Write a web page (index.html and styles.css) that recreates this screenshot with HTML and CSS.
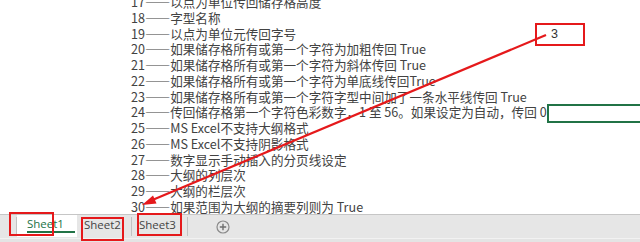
FILE: index.html
```html
<!DOCTYPE html>
<html lang="zh-CN">
<head>
<meta charset="utf-8">
<title>Sheet</title>
<link rel="stylesheet" href="styles.css">
</head>
<body>
<div class="grid">
  <ul class="rows">
    <li>17——以点为单位传回储存格高度</li>
    <li>18——字型名称</li>
    <li>19——以点为单位元传回字号</li>
    <li>20——如果储存格所有或第一个字符为加粗传回 True</li>
    <li>21——如果储存格所有或第一个字符为斜体传回 True</li>
    <li>22——如果储存格所有或第一个字符为单底线传回True</li>
    <li>23——如果储存格所有或第一个字符字型中间加了一条水平线传回 True</li>
    <li>24——传回储存格第一个字符色彩数字，1 至 56。如果设定为自动，传回 0</li>
    <li>25——MS Excel不支持大纲格式</li>
    <li>26——MS Excel不支持阴影格式</li>
    <li>27——数字显示手动插入的分页线设定</li>
    <li>28——大纲的列层次</li>
    <li>29——大纲的栏层次</li>
    <li>30——如果范围为大纲的摘要列则为 True</li>
  </ul>
</div>
<div class="tabbar">
  <div class="nav"></div>
  <div class="tab active"><span>Sheet1</span></div>
  <div class="tab t2">Sheet2</div>
  <div class="tab t3">Sheet3</div>
  <div class="add">
    <svg width="14" height="14" viewBox="0 0 14 14"><circle cx="7" cy="7" r="6" fill="none" stroke="#8a8a8a" stroke-width="1.2"/><path d="M7 3.8v6.4M3.8 7h6.4" stroke="#6f6f6f" stroke-width="1.4"/></svg>
  </div>
</div>

<div class="cell-sel"></div>
<div class="callout">3</div>
<div class="box b1"></div>
<div class="box b2"></div>
<div class="box b3"></div>
<svg class="arrow" width="640" height="242" viewBox="0 0 640 242">
  <line x1="546" y1="35" x2="150" y2="201" stroke="#e5191b" stroke-width="2.2"/>
  <polygon points="142,205 153,195.5 156.5,203.5" fill="#e5191b"/>
</svg>
</body>
</html>
```
FILE: styles.css
```css
html, body {
  margin: 0;
  padding: 0;
}
body {
  width: 640px;
  height: 242px;
  overflow: hidden;
  position: relative;
  background: #ffffff;
}
.grid {
  height: 214px;
  overflow: hidden;
}
.rows {
  list-style: none;
  margin: -6px 0 0 131px;
  padding: 0;
  font-family: "Noto Sans CJK SC", "Noto Sans", sans-serif;
  font-size: 12.6px;
  line-height: 15.75px;
  color: #424242;
  white-space: nowrap;
}
.tabbar {
  height: 27px;
  border-top: 1px solid #c6c6c6;
  background: linear-gradient(to bottom, #e6e6e6 0, #e6e6e6 23px, #f2f2f2 23px, #f2f2f2 24px, #e4e4e4 24px);
  display: flex;
  align-items: flex-start;
  font-family: "Open Sans", "Noto Sans", sans-serif;
  font-size: 11.5px;
  color: #444444;
}
.nav {
  width: 16px;
  height: 19px;
  margin-top: 2px;
  border-right: 1px solid #c2c2c2;
}
.tab {
  height: 22px;
  line-height: 18px;
  box-sizing: border-box;
}
.tab.active {
  width: 60px;
  background: #ffffff;
  color: #217346;
  padding: 0 2px 0 10px;
}
.tab.active span {
  display: block;
  height: 16px;
  line-height: 17px;
  border-bottom: 2px solid #217346;
}
.t2, .t3 {
  padding: 0 6px 0 7px;
  width: 56px;
  border-right: 1px solid #c2c2c2;
  height: 19px;
  margin-top: 2px;
  line-height: 16px;
}
.t2 {
  width: 55px;
}
.add {
  margin: 5px 0 0 28px;
  width: 14px;
  height: 14px;
}
.add svg {
  display: block;
}
.cell-sel {
  position: absolute;
  left: 547px;
  top: 104px;
  width: 100px;
  height: 15px;
  border: 2px solid #217346;
}
.callout {
  position: absolute;
  left: 535px;
  top: 23px;
  height: 19px;
  border: 2px solid #e5191b;
  font-family: "Liberation Sans", sans-serif;
  font-size: 12.5px;
  line-height: 19px;
  color: #333333;
  padding-left: 14px;
  box-sizing: content-box;
  width: 32px;
}
.box {
  position: absolute;
  border: 2px solid #e5191b;
  box-sizing: border-box;
}
.b1 {
  left: 9px;
  top: 212px;
  width: 45px;
  height: 24px;
}
.b2 {
  left: 81px;
  top: 217px;
  width: 43px;
  height: 24px;
}
.b3 {
  left: 137px;
  top: 213px;
  width: 45px;
  height: 23px;
}
.arrow {
  position: absolute;
  left: 0;
  top: 0;
  pointer-events: none;
}
```
